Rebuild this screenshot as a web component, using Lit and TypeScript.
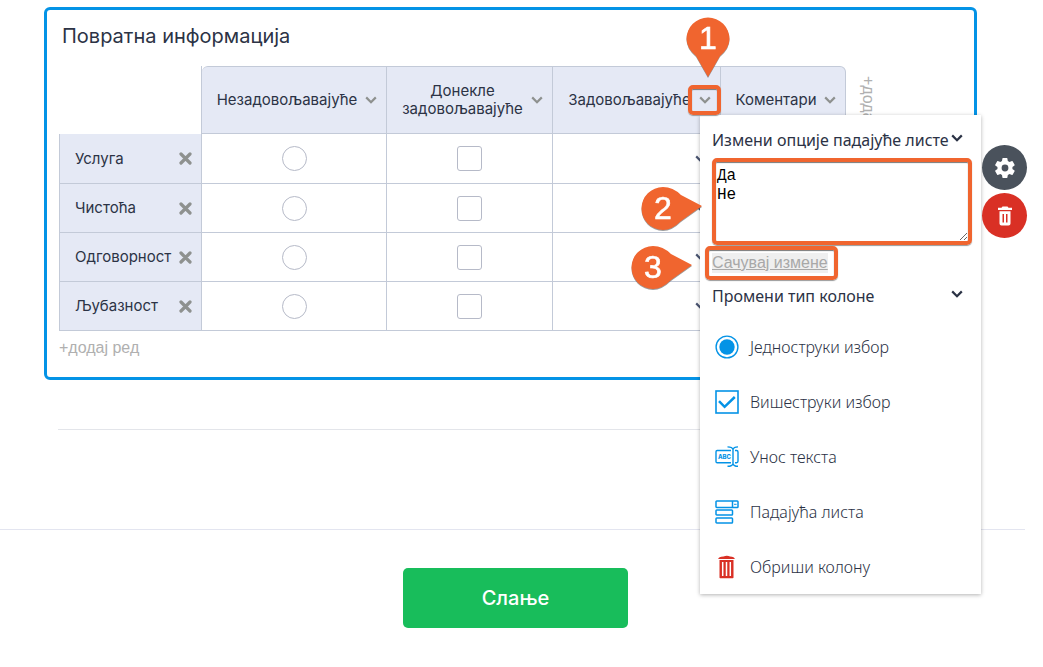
import { LitElement, html, css, svg } from "lit";
import { customElement } from "lit/decorators.js";

type CellKind = "radio" | "checkbox" | "select" | "text";

interface Column {
  title: string;
  kind: CellKind;
}

const COLUMNS: Column[] = [
  { title: "Незадовољавајуће", kind: "radio" },
  { title: "Донекле задовољавајуће", kind: "checkbox" },
  { title: "Задовољавајуће", kind: "select" },
  { title: "Коментари", kind: "text" },
];

const ROWS = ["Услуга", "Чистоћа", "Одговорност", "Љубазност"];

const chevron = html`<svg class="chevron" viewBox="0 0 12 8" aria-hidden="true">
  <path d="M1.2 1.4 6 6.2l4.8-4.8" fill="none" stroke="currentColor" stroke-width="2.2" />
</svg>`;

const cross = html`<svg class="cross" viewBox="0 0 13 13" aria-hidden="true">
  <path d="M2 2l9 9M11 2l-9 9" fill="none" stroke="currentColor" stroke-width="3.2" stroke-linecap="round" />
</svg>`;

const icon = (body: unknown) =>
  html`<svg class="type-icon" viewBox="0 0 24 24" aria-hidden="true">${body}</svg>`;

const TYPES = [
  {
    label: "Једноструки избор",
    icon: icon(svg`<circle cx="12" cy="12" r="10.9" fill="none" stroke="#0493e6" stroke-width="1.4"/>
      <circle cx="12" cy="12" r="7.7" fill="#0493e6"/>`),
  },
  {
    label: "Вишеструки избор",
    icon: icon(svg`<rect x="1" y="1" width="22" height="22" fill="none" stroke="#0493e6" stroke-width="1.6"/>
      <path d="M4 11.2l5.6 5.6L19.8 7" fill="none" stroke="#0493e6" stroke-width="2.5"/>`),
  },
  {
    label: "Унос текста",
    icon: icon(svg`<g fill="none" stroke="#0493e6" stroke-width="1.4">
      <path d="M16 5.5H2.2a1.2 1.2 0 0 0-1.2 1.2v9.8a1.2 1.2 0 0 0 1.2 1.2H16M20 5.5h1.6a1.4 1.4 0 0 1 1.4 1.4v9.4a1.4 1.4 0 0 1-1.4 1.4H20"/>
      <path d="M18 4v15.5M12.5 1.9c3 0 5 .8 5.500 2.600.5-1.800 2.500-2.600 5-2.600M12.500 21.300c3 0 5-.8 5.500-2.600.5 1.800 2.500 2.600 5 2.600"/></g>
      <text x="3" y="14" font-family="Inter, sans-serif" font-size="6" font-weight="800" fill="#0493e6">ABC</text>`),
  },
  {
    label: "Падајућа листа",
    icon: icon(svg`<g fill="none" stroke="#0493e6" stroke-width="1.5">
      <rect x="1" y="1" width="22" height="6.500" rx=".8"/><path d="M17.500 1v6.500"/>
      <path d="M19 4.300h2.600" stroke-width="1"/>
      <rect x="1" y="10" width="16.500" height="5" rx=".8"/>
      <rect x="1" y="18" width="16.500" height="5" rx=".8"/></g>`),
  },
  {
    label: "Обриши колону",
    icon: icon(svg`<path d="M8.500 1.500Q12 .2 15 1.500q4.500.2 4.800 2.500H3.200q.3-2.300 5.300-2.500z" fill="#d93025"/>
      <path d="M4.500 5h14v17.500a.8.8 0 0 1-.8.8H5.300a.8.8 0 0 1-.8-.8z" fill="#d93025"/>
      <path d="M7.700 7v14M11.500 7v14M15.300 7v14" stroke="#fff" stroke-width="1.500"/>`),
  },
];

@customElement("app-root")
export class AppRoot extends LitElement {
  static styles = css`
    :host {
      display: block;
      padding: 7px 18px 39px 0;
      color: #2c3345;
      background: #fff;
      font: 15px/18px Inter, sans-serif;
    }
    *,
    *::before {
      box-sizing: border-box;
    }
    button,
    input,
    select,
    textarea {
      font: inherit;
      color: inherit;
      margin: 0;
      padding: 0;
      border: 0;
      background: none;
    }
    button {
      cursor: pointer;
    }
    svg {
      display: block;
      flex: none;
    }
    .card {
      position: relative;
      margin: 0 48px 0 44px;
      padding: 14px 12px 19px;
      border: 3px solid #0493e6;
      border-radius: 6px;
    }
    .title {
      margin: 0 0 18px 3px;
      font-size: 20px;
      line-height: 24px;
      font-weight: 400;
    }
    .matrix-area {
      display: flex;
      align-items: flex-start;
      gap: 12px;
    }
    .matrix {
      border-collapse: separate;
      border-spacing: 0;
      table-layout: fixed;
      width: 787px;
    }
    .col-rows {
      width: 143px;
    }
    .col-radio {
      width: 185px;
    }
    .col-checkbox {
      width: 166px;
    }
    .col-select {
      width: 168px;
    }
    .col-text {
      width: 125px;
    }
    th,
    td {
      padding: 0;
      font-weight: 400;
      border: 0 solid #c3cad8;
      border-width: 0 1px 1px 0;
    }
    .corner {
      border-bottom: 0;
    }
    .column-head {
      height: 68px;
      border-top-width: 1px;
      background: #e5e9f5;
    }
    .column-head:nth-child(2) {
      border-top-left-radius: 6px;
    }
    .column-head:last-child {
      border-top-right-radius: 6px;
    }
    .head-content {
      display: flex;
      align-items: center;
      gap: 7px;
      padding: 0 9px 0 14px;
    }
    .head-text {
      flex: 1;
      text-align: center;
    }
    .chevron {
      width: 12px;
      height: 8px;
    }
    .head-content button {
      color: #8e918f;
    }
    .row-head {
      height: 49px;
      background: #e5e9f5;
      border-left-width: 1px;
      text-align: left;
    }
    tr:first-child .row-head {
      height: 50px;
    }
    .row-content {
      display: flex;
      align-items: center;
      justify-content: space-between;
      padding: 0 9px 0 15px;
    }
    .row-content button {
      color: #8e918f;
    }
    .cross {
      width: 13px;
      height: 13px;
    }
    .choice {
      appearance: none;
      display: block;
      width: 25px;
      height: 25px;
      margin: 0 auto;
      border: 1px solid #b6bac8;
      border-radius: 3px;
      background: #fff;
    }
    .round {
      border-radius: 50%;
    }
    .select-wrap {
      display: grid;
      align-items: center;
      justify-items: end;
      padding: 0 13px;
      color: #4b5672;
    }
    .select-wrap > * {
      grid-area: 1 / 1;
    }
    .select-wrap select {
      appearance: none;
      width: 100%;
      height: 32px;
    }
    .answer {
      display: block;
      width: 100%;
      height: 32px;
      padding: 0 12px;
    }
    .add {
      color: #b0b0b0;
      font: 16px/20px "Liberation Sans", sans-serif;
    }
    .add-column {
      writing-mode: vertical-rl;
      padding-top: 10px;
    }
    .add-row {
      display: block;
      margin-top: 7px;
    }
    .rule {
      height: 1px;
      margin: 49px 59px 0 58px;
      border: 0;
      background: #e3e5ea;
    }
    .footer {
      display: flex;
      justify-content: center;
      margin-top: 99px;
      padding: 38px 0 0 6px;
      border-top: 1px solid #e3e5f0;
    }
    .send {
      width: 225px;
      height: 60px;
      border-radius: 5px;
      background: #18bd5b;
      color: #fff;
      font-size: 20px;
      font-weight: 500;
    }
    .tools {
      position: absolute;
      z-index: 3;
      left: 100%;
      top: 135px;
      margin-left: 8px;
      display: grid;
      gap: 3px;
    }
    .tool {
      display: grid;
      place-items: center;
      width: 45px;
      height: 45px;
      border-radius: 50%;
      background: #4a525c;
      color: #fff;
    }
    .tool svg {
      width: 24px;
      height: 24px;
    }
    .danger {
      background: #d93025;
    }
    .menu {
      position: absolute;
      z-index: 2;
      left: 653px;
      top: 105px;
      width: 281px;
      padding: 15px 9px 0 12px;
      background: #fff;
      color: #2b3245;
      box-shadow: 0 1px 4px rgba(0, 0, 0, 0.3);
      font: 16px/20px "Noto Sans", sans-serif;
    }
    .section {
      display: flex;
      align-items: flex-start;
      justify-content: space-between;
      width: 100%;
      padding-right: 9px;
      font-weight: 400;
      white-space: nowrap;
      text-align: left;
    }
    .section .chevron {
      margin-top: 4px;
    }
    .options {
      display: block;
      width: 100%;
      height: 87px;
      margin-top: 8px;
      padding: 5px 1px 2px;
      resize: vertical;
      border: 4px solid #f0652f;
      border-radius: 5px;
      box-shadow: inset 0 1px 1px #777, 0 1px 1px #999;
      color: #000;
      font: 16px/19px "Liberation Mono", monospace;
      outline: 0;
    }
    .save {
      display: block;
      margin: 8px 0 13px;
      background: #efefef;
      color: #a8a8a8;
      font: 16px/20px "Liberation Sans", sans-serif;
      text-decoration: underline;
    }
    .types {
      margin: 0;
      padding: 13px 0 0;
      list-style: none;
    }
    .type {
      display: flex;
      align-items: center;
      gap: 11px;
      width: 100%;
      height: 55px;
      padding-left: 3px;
      font-weight: 300;
    }
    .type-icon {
      width: 24px;
      height: 24px;
    }
    .frame {
      position: absolute;
      z-index: 4;
      border: 4px solid #f0652f;
      border-radius: 5px;
      box-shadow: inset 0 1px 1px #777, 0 1px 1px #999;
      pointer-events: none;
    }
    .frame-arrow {
      left: 641px;
      top: 75px;
      width: 33px;
      height: 30px;
    }
    .frame-save {
      left: 658px;
      top: 236px;
      width: 133px;
      height: 34px;
    }
    .pin {
      position: absolute;
      z-index: 5;
      overflow: visible;
      pointer-events: none;
      filter: drop-shadow(0 1px 0 rgba(90, 90, 90, 0.6));
    }
    .pin text {
      font: 32px "Liberation Sans", sans-serif;
      fill: #fff;
      stroke: #fff;
      stroke-width: 0.6px;
      text-anchor: middle;
    }
    .pin path {
      fill: #f0652f;
    }
    .pin-1 {
      left: 639px;
      top: 7px;
    }
    .pin-2 {
      left: 594px;
      top: 177px;
    }
    .pin-3 {
      left: 584px;
      top: 236px;
    }
  `;

  private cell(kind: CellKind, row: string, column: string) {
    const label = `${row}: ${column}`;
    switch (kind) {
      case "radio":
        return html`<input class="choice round" type="radio" name=${row} aria-label=${label} />`;
      case "checkbox":
        return html`<input class="choice" type="checkbox" aria-label=${label} />`;
      case "select":
        return html`<div class="select-wrap">
          <select aria-label=${label}><option></option></select>${chevron}
        </div>`;
      default:
        return html`<input class="answer" type="text" aria-label=${label} />`;
    }
  }

  private pin(n: number, sideways: boolean) {
    const tail = sideways
      ? "M22 0A21.500 21.500 0 1 0 22 43Q31 43 40 34L61 19 40 8Q32 0 22 0z"
      : "M.5 22A21.500 21.500 0 1 1 43.500 22Q43.500 31 34 39L22 60 10 39Q.5 31 .5 22z";
    return html`<svg class="pin pin-${n}" width="44" height="44" role="img" aria-label=${n}>
      <path d=${tail} />
      <text x="22" y="32">${n}</text>
    </svg>`;
  }

  private menu() {
    return html`<div class="menu">
      <label class="section" for="options">Измени опције падајуће листе ${chevron}</label>
      <textarea class="options" id="options" .value=${"Да\nНе"}></textarea>
      <button class="save">Сачувај измене</button>
      <button class="section">Промени тип колоне ${chevron}</button>
      <ul class="types">
        ${TYPES.map((t) => html`<li><button class="type">${t.icon}${t.label}</button></li>`)}
      </ul>
    </div>`;
  }

  render() {
    return html`
      <section class="card">
        <h2 class="title">Повратна информација</h2>
        <div class="matrix-area">
          <table class="matrix">
            <colgroup>
              <col class="col-rows" />
              ${COLUMNS.map((c) => html`<col class="col-${c.kind}" />`)}
            </colgroup>
            <thead>
              <tr>
                <td class="corner"></td>
                ${COLUMNS.map(
                  (c) => html`<th class="column-head" scope="col">
                    <div class="head-content">
                      <span class="head-text">${c.title}</span>
                      <button aria-label=${c.title}>${chevron}</button>
                    </div>
                  </th>`
                )}
              </tr>
            </thead>
            <tbody>
              ${ROWS.map(
                (row) => html`<tr>
                  <th class="row-head" scope="row">
                    <div class="row-content">
                      ${row}<button aria-label=${row}>${cross}</button>
                    </div>
                  </th>
                  ${COLUMNS.map((c) => html`<td>${this.cell(c.kind, row, c.title)}</td>`)}
                </tr>`
              )}
            </tbody>
          </table>
          <button class="add add-column">+додај колону</button>
        </div>
        <button class="add add-row">+додај ред</button>
        ${this.menu()}
        <div class="tools">
          <button class="tool" aria-label="Подешавања">
            <svg viewBox="0 0 24 24"><path fill="currentColor" d="M19.400 13a7.500 7.500 0 0 0 0-2l2.100-1.600a.5.5 0 0 0 .1-.6l-2-3.500a.5.5 0 0 0-.6-.2l-2.500 1a7.300 7.300 0 0 0-1.700-1l-.4-2.600a.5.5 0 0 0-.5-.5h-4a.5.5 0 0 0-.5.5L9 5.100a7.300 7.300 0 0 0-1.700 1l-2.500-1a.5.5 0 0 0-.6.2l-2 3.500a.5.5 0 0 0 .1.600L4.500 11a7.500 7.500 0 0 0 0 2l-2.200 1.600a.5.5 0 0 0-.1.600l2 3.500c.1.200.4.300.6.200l2.500-1a7.300 7.300 0 0 0 1.700 1l.4 2.600c0 .3.200.5.500.5h4c.3 0 .5-.2.500-.5l.4-2.600a7.300 7.300 0 0 0 1.700-1l2.500 1c.2.100.5 0 .6-.2l2-3.500a.5.5 0 0 0-.1-.6zM12 15.400a3.400 3.400 0 1 1 0-6.800 3.400 3.400 0 0 1 0 6.800z"/></svg>
          </button>
          <button class="tool danger" aria-label="Обриши">
            <svg viewBox="0 0 24 24"><path fill="currentColor" fill-rule="evenodd" d="M9.500 2.500h5l1 1.200H19V6H5V3.700h3.500zM6.500 7.200h11v12.300a2 2 0 0 1-2 2h-7a2 2 0 0 1-2-2zM9.500 10v8.500H11V10zm3.500 0v8.500h1.500V10z"/></svg>
          </button>
        </div>
        <div class="frame frame-arrow"></div>
        <div class="frame frame-save"></div>
        ${this.pin(1, false)} ${this.pin(2, true)} ${this.pin(3, true)}
      </section>
      <hr class="rule" />
      <footer class="footer"><button class="send">Слање</button></footer>
    `;
  }
}
